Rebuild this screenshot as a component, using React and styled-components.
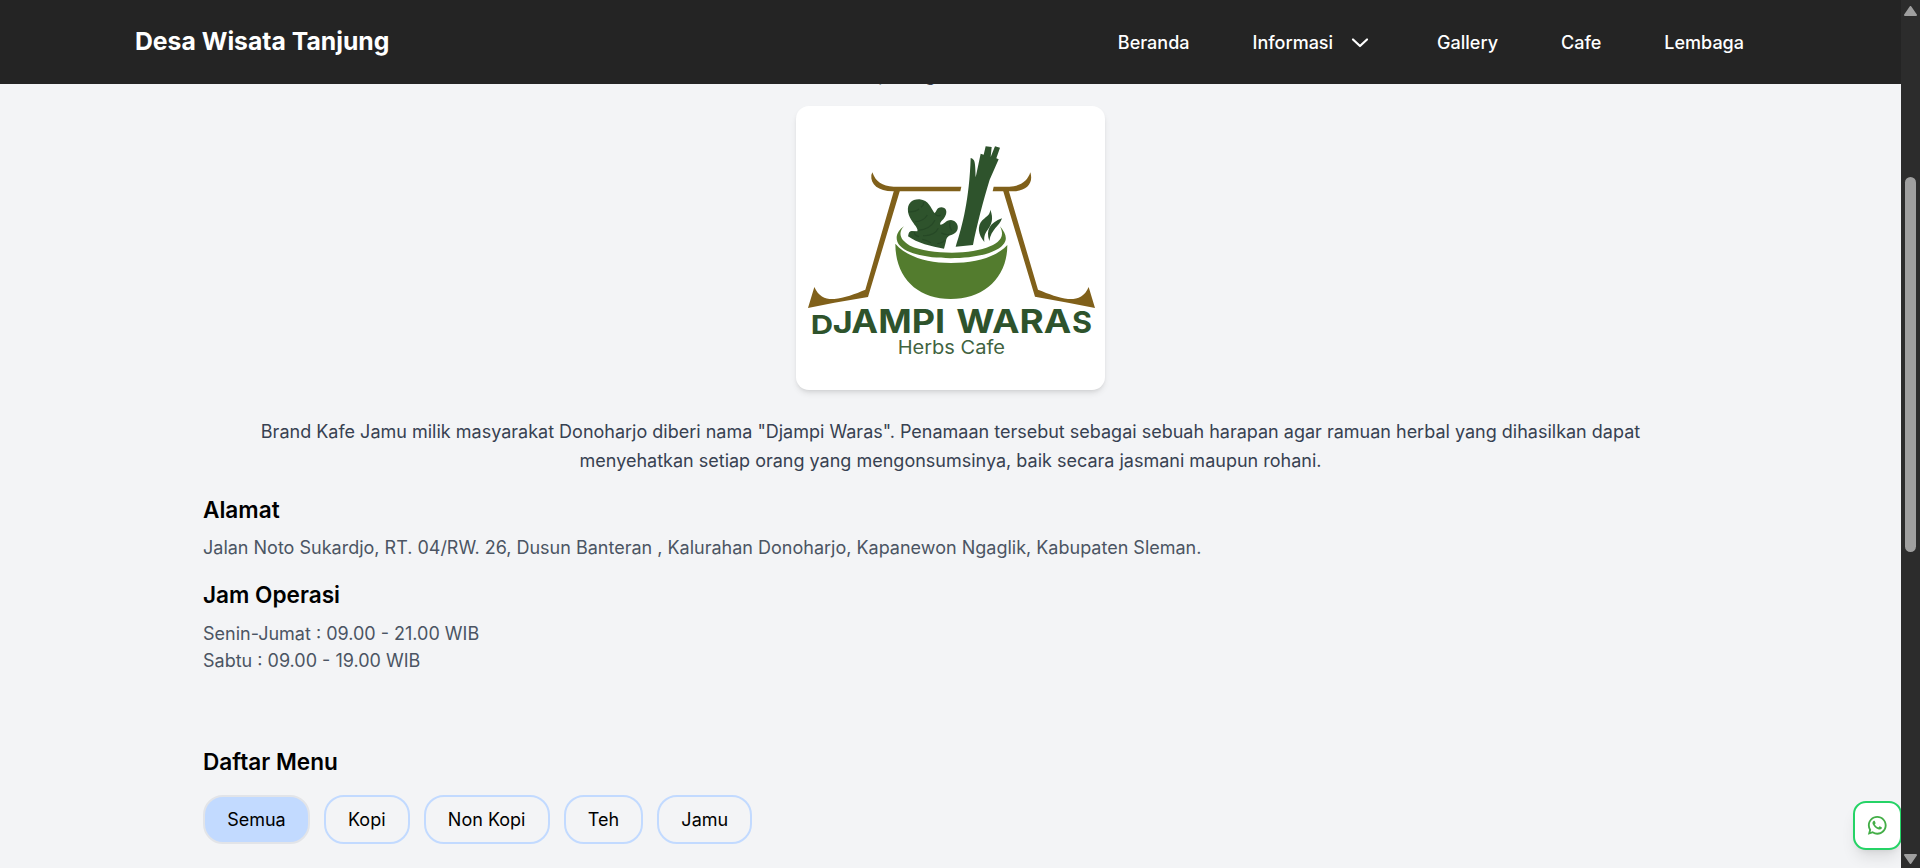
import React from 'react';
import styled, { createGlobalStyle } from 'styled-components';
import { RiWhatsappLine } from 'react-icons/ri';

const GlobalStyle = createGlobalStyle`
  * { box-sizing: border-box; }
  html, body { margin: 0; padding: 0; height: 100%; overflow: hidden; }
  body { background: #f3f4f6; font-family: Inter, "Liberation Sans", sans-serif; color: #000; }
  h1, h2, p, ul { margin: 0; padding: 0; }
`;

const Window = styled.div`
  display: flex;
  height: 868px;
  overflow: hidden;
`;

const Page = styled.div`
  position: relative;
  flex: 1;
  min-width: 0;
  overflow: hidden;
  background: #f3f4f6;
`;

const Header = styled.header`
  position: relative;
  z-index: 2;
  height: 84px;
  padding: 0 157px 0 135px;
  display: flex;
  align-items: center;
  justify-content: space-between;
  background: #242424;
  color: #fff;
`;

const Brand = styled.h1`
  font-size: 24.75px;
  line-height: 36px;
  font-weight: 700;
  padding-bottom: 2px;
`;

const Nav = styled.nav`
  display: flex;
  align-items: center;
  gap: 63px;
  padding-top: 2px;
`;

const NavLink = styled.a`
  display: flex;
  align-items: center;
  gap: 18px;
  font-size: 18px;
  line-height: 28px;
  font-weight: 500;
  color: #fff;
  svg { margin-right: 5px; }
`;

const Main = styled.main`
  width: 1495px;
  margin: 0 auto;
`;

const Intro = styled.p`
  height: 22px;
  margin-top: -20px;
  margin-bottom: 20px;
  padding-left: 675px;
  font-size: 18px;
  line-height: 22px;
  color: #374151;
`;

const LogoCard = styled.div`
  width: 309px;
  height: 284px;
  margin: 0 auto;
  border-radius: 13px;
  background: #fff;
  box-shadow: 0 4px 6px -1px rgba(0, 0, 0, 0.1), 0 2px 4px -2px rgba(0, 0, 0, 0.1);
  svg { display: block; width: 309px; height: 284px; }
`;

const Description = styled.p`
  padding: 0 56px;
  margin-top: 27px;
  text-align: center;
  font-size: 18px;
  line-height: 29.25px;
  color: #374151;
`;

const Section = styled.section`
  margin-top: ${(p) => p.$top}px;
`;

const Heading = styled.h2`
  font-size: 22.6px;
  line-height: 32px;
  font-weight: 600;
`;

const Detail = styled.p`
  font-size: 18px;
  line-height: 27px;
  color: #4b5563;
`;

const Details = styled.div`
  margin-top: ${(p) => p.$top}px;
`;

const Filters = styled.div`
  display: flex;
  gap: 14px;
  margin-top: 17px;
`;

const Chip = styled.button`
  height: 49px;
  padding: 0 22.15px;
  border: 2px solid ${(p) => (p.$active ? '#e2e4e8' : '#c2daff')};
  border-radius: 20px;
  background: ${(p) => (p.$active ? '#c2daff' : 'transparent')};
  font: 400 18px/27px Inter, "Liberation Sans", sans-serif;
  color: #000;
`;

const ChatButton = styled.button`
  position: absolute;
  right: -1px;
  top: 801px;
  width: 49px;
  height: 49px;
  padding: 0;
  display: flex;
  align-items: center;
  justify-content: center;
  border: 2px solid #25d366;
  border-radius: 13px;
  background: #fff;
  color: #43ae47;
  box-shadow: 0 10px 15px -3px rgba(0, 0, 0, 0.1), 0 4px 6px -4px rgba(0, 0, 0, 0.1);
`;

const Scrollbar = styled.div`
  width: 19px;
  padding: 6px 0 4px;
  display: flex;
  flex-direction: column;
  align-items: center;
  background: #2c2c2c;
  svg { display: block; }
`;

const Track = styled.div`
  flex: 1;
  padding-top: 161px;
`;

const Thumb = styled.div`
  width: 11px;
  height: 375px;
  border-radius: 6px;
  background: #9f9f9f;
`;

function Chevron() {
  return (
    <svg width="18" height="18" viewBox="0 0 18 18" fill="none" stroke="#fff" strokeWidth="2.2" strokeLinecap="round" strokeLinejoin="round">
      <path d="M2 5.5l7 6.5L16 5.5" />
    </svg>
  );
}

function Logo() {
  return (
    <svg viewBox="48 138 927 852" role="img" aria-label="Djampi Waras">
      <g fill="#80601a">
        <path d="M277 337C287 365 306 379 341 380H544L541 394H338C295 393 271 374 274 345Z" />
        <path d="M641 380H688C723 379 743 362 751 337C761 369 741 393 700 394H638Z" />
        <path d="M343 388H361L264 711L163 728L84 744L103 681C116 711 139 719 163 717C193 714 225 702 256 689Z" />
        <path d="M668 388H685L774 689C807 702 837 714 864 717C890 719 914 711 926 681L945 744L864 728L765 710Z" />
      </g>
      <g fill="#537c2e">
        <path d="M346 551C380 590 440 609 513 609C588 609 651 590 682 555C682 655 610 717 512 717C414 717 346 655 346 551Z" />
        <path d="M372 499C353 519 360 540 390 557C450 584 575 585 630 559C668 543 672 523 660 499C678 520 684 539 669 554C627 606 408 609 360 557C343 540 348 515 372 499Z" />
      </g>
      <g fill="#2e532c">
        <path d="M527 560C548 496 568 416 572 294C585 298 586 305 587 352L602 281L611 284L617 259L635 261L632 291L645 259L660 263L649 295L656 298L629 359C610 422 590 497 579 555Z" />
        <path d="M613 546C594 523 591 499 607 481C623 465 629 466 631 449C641 476 636 491 622 511C613 524 612 532 613 546Z" />
        <path d="M628 543C617 510 629 489 666 475C659 498 633 508 628 543Z" />
        <path d="M384 455C381 430 396 417 419 418C446 421 452 443 463 459C471 457 468 442 485 442C503 443 502 462 492 475C486 483 479 487 481 494C493 494 496 481 513 480C530 482 537 498 532 510C524 528 503 522 499 538C497 548 495 556 492 566C455 560 411 549 384 529C387 520 385 515 395 513L412 514C415 506 405 497 398 486C391 475 386 467 384 455Z" />
      </g>
      <g fill="none" stroke="#264826" strokeWidth="3.5">
        <path d="M386 456Q409 455 417 447M423 442Q432 435 431 426M405 485Q430 485 442 465M415 511Q451 508 465 481M429 527Q463 529 475 505M403 516Q403 527 417 530M427 538Q443 541 452 548M472 551Q490 548 492 541M466 463Q475 471 482 465M510 486Q507 501 515 511M484 519Q494 525 509 523" />
      </g>
      <g fill="#2e532c" fontFamily="Inter, sans-serif" fontWeight="700">
        <text x="92" y="821" fontSize="79" textLength="67" lengthAdjust="spacingAndGlyphs">D</text>
        <text x="158" y="819" fontSize="90" textLength="60" lengthAdjust="spacingAndGlyphs">J</text>
        <text x="214" y="818" fontSize="96" textLength="281" lengthAdjust="spacingAndGlyphs">AMPI</text>
        <text x="529" y="818" fontSize="96" textLength="345" lengthAdjust="spacingAndGlyphs">WARA</text>
        <text x="876" y="818" fontSize="90" textLength="60" lengthAdjust="spacingAndGlyphs">S</text>
      </g>
      <text x="353" y="882" fill="#41633f" fontFamily="Inter, sans-serif" fontWeight="400" fontSize="56" textLength="322" lengthAdjust="spacingAndGlyphs">Herbs Cafe</text>
    </svg>
  );
}

const links = ['Beranda', 'Informasi', 'Gallery', 'Cafe', 'Lembaga'];
const categories = ['Semua', 'Kopi', 'Non Kopi', 'Teh', 'Jamu'];

export default function App() {
  return (
    <Window>
      <GlobalStyle />
      <Page>
        <Header>
          <Brand>Desa Wisata Tanjung</Brand>
          <Nav>
            {links.map((label) => (
              <NavLink key={label}>
                {label}
                {label === 'Informasi' && <Chevron />}
              </NavLink>
            ))}
          </Nav>
        </Header>
        <Main>
          <Intro>pulang</Intro>
          <LogoCard><Logo /></LogoCard>
          <Description>
            Brand Kafe Jamu milik masyarakat Donoharjo diberi nama "Djampi Waras". Penamaan tersebut sebagai
            sebuah harapan agar ramuan herbal yang dihasilkan dapat menyehatkan setiap orang yang mengonsumsinya,
            baik secara jasmani maupun rohani.
          </Description>
          <Section $top={18}>
            <Heading>Alamat</Heading>
            <Details $top={8}>
              <Detail>Jalan Noto Sukardjo, RT. 04/RW. 26, Dusun Banteran , Kalurahan Donoharjo, Kapanewon Ngaglik, Kabupaten Sleman.</Detail>
            </Details>
          </Section>
          <Section $top={18}>
            <Heading>Jam Operasi</Heading>
            <Details $top={9}>
              <Detail>Senin-Jumat : 09.00 - 21.00 WIB</Detail>
              <Detail>Sabtu : 09.00 - 19.00 WIB</Detail>
            </Details>
          </Section>
          <Section $top={72}>
            <Heading>Daftar Menu</Heading>
            <Filters>
              {categories.map((name, i) => (
                <Chip key={name} $active={i === 0}>{name}</Chip>
              ))}
            </Filters>
          </Section>
        </Main>
        <ChatButton aria-label="WhatsApp"><RiWhatsappLine size={22.5} /></ChatButton>
      </Page>
      <Scrollbar>
        <svg width="13" height="10" viewBox="0 0 13 10"><path d="M6.5 1L12 9H1z" fill="#9f9f9f" stroke="#9f9f9f" strokeWidth="2" strokeLinejoin="round" /></svg>
        <Track><Thumb /></Track>
        <svg width="13" height="10" viewBox="0 0 13 10"><path d="M6.5 9L12 1H1z" fill="#9f9f9f" stroke="#9f9f9f" strokeWidth="2" strokeLinejoin="round" /></svg>
      </Scrollbar>
    </Window>
  );
}
